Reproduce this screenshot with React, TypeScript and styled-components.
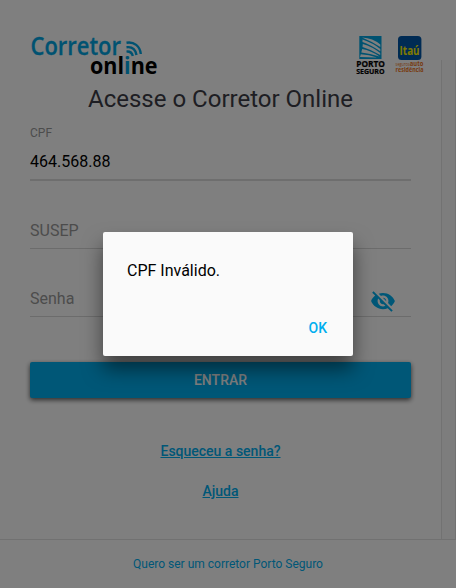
import React from 'react';
import styled, { createGlobalStyle } from 'styled-components';

const GlobalStyle = createGlobalStyle`
  *, *::before, *::after { box-sizing: border-box; }
  body { margin: 0; font-family: Roboto, "Liberation Sans", sans-serif; background: #fff; }
`;

const Screen = styled.div`
  position: relative;
  display: flex;
  flex-direction: column;
  width: 456px;
  height: 588px;
  overflow: hidden;
  background: #fff;
`;

const Content = styled.main`
  display: flex;
  flex: 1;
  min-height: 0;
`;

const Login = styled.form`
  display: flex;
  flex-direction: column;
  width: 441px;
  padding: 32px 30px 0;
`;

const ScrollTrack = styled.div`
  width: 15px;
  margin-top: 60px;
  background: #fafafa;
  border: solid #e4e4e4;
  border-width: 0 1px;
`;

const Header = styled.header`
  display: flex;
  justify-content: space-between;
  height: 46px;
  margin-right: -16px;
`;

const Partners = styled.div`
  display: flex;
  flex: none;
`;

const Title = styled.h1`
  margin: 7px 0 0;
  font-size: 24px;
  font-weight: 400;
  line-height: 28px;
  text-align: center;
  color: #3c3c46;
`;

const Field = styled.div<{ $height: number; $active?: boolean }>`
  display: flex;
  flex-direction: column;
  justify-content: flex-end;
  height: ${(p) => p.$height}px;
  border-bottom: ${(p) => (p.$active ? 2 : 1)}px solid ${(p) => (p.$active ? '#dcdcdc' : '#d8d8d8')};
`;

const FieldLabel = styled.label`
  font-size: 12px;
  line-height: 14px;
  color: #999;
  margin-bottom: 3px;
`;

const FieldRow = styled.div<{ $filled?: boolean }>`
  display: flex;
  align-items: center;
  justify-content: space-between;
  height: 36px;
  padding-right: 15px;
  font-size: 16px;
  color: ${(p) => (p.$filled ? '#000' : '#999')};
`;

const SubmitButton = styled.button`
  height: 36px;
  margin-top: 45px;
  border: 0;
  border-radius: 2px;
  background: #00aeef;
  color: #fff;
  font: 500 14px Roboto, sans-serif;
  text-transform: uppercase;
  box-shadow: 0 2px 5px rgba(0, 0, 0, 0.65);
`;

const Links = styled.nav`
  display: flex;
  flex-direction: column;
  align-items: center;
  gap: 24px;
  margin-top: 45px;
`;

const TextLink = styled.a`
  font-size: 14px;
  font-weight: 500;
  line-height: 16px;
  color: #00aeef;
  text-decoration: underline;
`;

const Footer = styled.footer`
  display: flex;
  align-items: center;
  justify-content: center;
  height: 49px;
  border-top: 1px solid #e2e2e2;
  font-size: 12px;
  color: #00aeef;
`;

const Backdrop = styled.div`
  position: absolute;
  inset: 0;
  display: flex;
  align-items: center;
  justify-content: center;
  background: rgba(0, 0, 0, 0.5);
`;

const Dialog = styled.div`
  display: flex;
  flex-direction: column;
  justify-content: space-between;
  width: 250px;
  height: 124px;
  padding: 29px 24px 19px;
  border-radius: 2px;
  background: #fafafa;
  box-shadow: 0 13px 20px rgba(0, 0, 0, 0.5);
`;

const Message = styled.p`
  margin: 0;
  font-size: 16px;
  line-height: 19px;
  color: #000;
`;

const DialogAction = styled.button`
  align-self: flex-end;
  margin-right: 2px;
  padding: 0;
  border: 0;
  background: none;
  color: #00aeef;
  font: 500 14px/17px Roboto, sans-serif;
`;

const SvgText = styled.text<{ $size: number; $weight?: number }>`
  font-family: "Open Sans", sans-serif;
  font-size: ${(p) => p.$size}px;
  font-weight: ${(p) => p.$weight ?? 700};
`;

const LogoSvg = styled.svg`
  display: block;
  overflow: visible;
`;

const EyeIcon = styled.svg`
  margin-top: 6px;
`;

const BrandLogo = () => (
  <LogoSvg width="130" height="46" viewBox="0 0 130 46" role="img" aria-label="Corretor online">
    <SvgText x="0.5" y="22.5" $size={25} $weight={600} textLength="90.5" lengthAdjust="spacingAndGlyphs" fill="#00a5e3" stroke="#00a5e3" strokeWidth=".3">Corretor</SvgText>
    <SvgText x="60" y="42" $size={24} textLength="67.5" lengthAdjust="spacingAndGlyphs" fill="#000">
      onl<tspan fill="#00a5e3">i</tspan>ne
    </SvgText>
    <g fill="none" stroke="#00a5e3" strokeWidth="2.4">
      <path d="M96.5 10.8C104 9.5 110 14 110.8 22" />
      <path d="M96.5 15.2C102 14.5 105.5 17 106.5 23" />
      <path d="M96.5 19.6C100 19.2 102 20.8 102.8 24" />
    </g>
  </LogoSvg>
);

const PortoLogo = () => (
  <LogoSvg width="38" height="46" viewBox="0 0 38 46" role="img" aria-label="Porto Seguro">
    <rect x="6.3" y="4" width="22.2" height="23" fill="#00a5e3" />
    <g fill="#fff">
      <path d="M9 5.5Q20 6 27.3 12.6V15Q18 9 9 5.5Z" />
      <path d="M9.5 7.5Q20 11 27.3 17V19.3Q17 12.5 9.5 10Z" />
      <path d="M9.8 12Q19 14.5 27.2 21V23Q18 17.5 9.5 15Z" />
      <path d="M9.2 17Q18 18.5 26.5 24.5Q17 21.5 8.3 20.5Z" />
      <path d="M7.8 22.2Q16 22.3 24 25.6Q15 25 7 25Z" />
    </g>
    <SvgText x="3.2" y="35.2" $size={8.4} textLength="28.8" lengthAdjust="spacingAndGlyphs" fill="#000" stroke="#000" strokeWidth=".2">PORTO</SvgText>
    <SvgText x="3.2" y="42" $size={7} textLength="28.4" lengthAdjust="spacingAndGlyphs" fill="#000" stroke="#000" strokeWidth=".2">SEGURO</SvgText>
  </LogoSvg>
);

const ItauLogo = () => (
  <LogoSvg width="36" height="46" viewBox="0 0 36 46" role="img" aria-label="Itaú seguros auto residência">
    <rect x="7" y="4" width="23.4" height="24" rx="3.5" fill="#0057a8" />
    <SvgText x="8.6" y="23.4" $size={12} textLength="20" lengthAdjust="spacingAndGlyphs" fill="#fff200">Itaú</SvgText>
    <SvgText x="4.6" y="33.8" $size={5} $weight={400} textLength="14" lengthAdjust="spacingAndGlyphs" fill="#ef7622">seguros</SvgText>
    <SvgText x="18.8" y="33.8" $size={6.6} textLength="13.5" lengthAdjust="spacingAndGlyphs" fill="#ef7622">auto</SvgText>
    <SvgText x="4.6" y="39.6" $size={6.2} textLength="27.8" lengthAdjust="spacingAndGlyphs" fill="#ef7622">residência</SvgText>
  </LogoSvg>
);

const HiddenEye = () => (
  <EyeIcon width="26" height="26" viewBox="0 0 24 24" fill="#00aeef" aria-hidden="true">
    <path d="M12 7c2.76 0 5 2.24 5 5 0 .65-.13 1.26-.36 1.83l2.92 2.92c1.51-1.26 2.7-2.89 3.43-4.75-1.73-4.39-6-7.5-11-7.5-1.4 0-2.74.25-3.98.7l2.16 2.16C10.74 7.13 11.35 7 12 7zM2 4.27l2.28 2.28.46.46C3.08 8.3 1.78 10.02 1 12c1.73 4.39 6 7.5 11 7.5 1.55 0 3.03-.3 4.38-.84l.42.42L19.73 22 21 20.73 3.27 3 2 4.27zM7.53 9.8l1.55 1.55c-.05.21-.08.43-.08.65 0 1.66 1.34 3 3 3 .22 0 .44-.03.65-.08l1.55 1.55c-.67.33-1.41.53-2.2.53-2.76 0-5-2.24-5-5 0-.79.2-1.53.53-2.2zm4.31-.78l3.15 3.15.02-.16c0-1.66-1.34-3-3-3l-.17.01z" />
  </EyeIcon>
);

export default function App() {
  return (
    <>
      <GlobalStyle />
      <Screen>
        <Content>
          <Login>
            <Header>
              <BrandLogo />
              <Partners>
                <PortoLogo />
                <ItauLogo />
              </Partners>
            </Header>
            <Title>Acesse o Corretor Online</Title>
            <Field $height={68} $active>
              <FieldLabel>CPF</FieldLabel>
              <FieldRow $filled>464.568.88</FieldRow>
            </Field>
            <Field $height={68}>
              <FieldRow>SUSEP</FieldRow>
            </Field>
            <Field $height={68}>
              <FieldRow>
                Senha
                <HiddenEye />
              </FieldRow>
            </Field>
            <SubmitButton type="button">Entrar</SubmitButton>
            <Links>
              <TextLink>Esqueceu a senha?</TextLink>
              <TextLink>Ajuda</TextLink>
            </Links>
          </Login>
          <ScrollTrack />
        </Content>
        <Footer>Quero ser um corretor Porto Seguro</Footer>
        <Backdrop>
          <Dialog role="alertdialog">
            <Message>CPF Inválido.</Message>
            <DialogAction type="button">OK</DialogAction>
          </Dialog>
        </Backdrop>
      </Screen>
    </>
  );
}
